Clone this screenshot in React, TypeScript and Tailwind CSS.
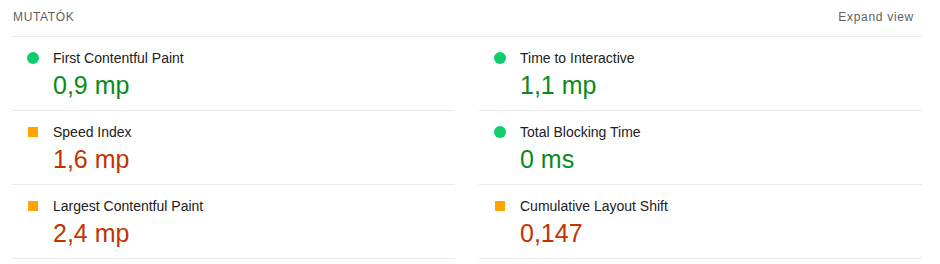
import React from 'react';

type Rating = 'pass' | 'average';

interface Metric {
  title: string;
  value: string;
  rating: Rating;
}

const LEFT: Metric[] = [
  { title: 'First Contentful Paint', value: '0,9 mp', rating: 'pass' },
  { title: 'Speed Index', value: '1,6 mp', rating: 'average' },
  { title: 'Largest Contentful Paint', value: '2,4 mp', rating: 'average' },
];

const RIGHT: Metric[] = [
  { title: 'Time to Interactive', value: '1,1 mp', rating: 'pass' },
  { title: 'Total Blocking Time', value: '0 ms', rating: 'pass' },
  { title: 'Cumulative Layout Shift', value: '0,147', rating: 'average' },
];

const MetricRow: React.FC<{ metric: Metric }> = ({ metric }) => {
  const pass = metric.rating === 'pass';
  return (
    <div className="h-[74px] border-b border-[#ebebeb] flex flex-col pt-[11px]">
      <div className="flex items-center h-[20px]">
        <div className="w-[41px] pl-[15px] flex">
          <div className="w-[12px] h-[12px] flex items-center justify-center">
            {pass ? (
              <span className="block w-[12px] h-[12px] rounded-full bg-[#0cce6b]" />
            ) : (
              <span className="block w-[10px] h-[10px] bg-[#ffa400]" />
            )}
          </div>
        </div>
        <span className="text-[14px] leading-[20px] text-[#212121]">{metric.title}</span>
      </div>
      <div
        className={`pl-[41px] mt-[2px] text-[25px] leading-[30px] ${
          pass ? 'text-[#0a8a1a]' : 'text-[#c33300]'
        }`}
      >
        {metric.value}
      </div>
    </div>
  );
};

export default function App() {
  return (
    <div className="w-[940px] h-[264px] bg-white font-['Liberation_Sans',Arial,sans-serif] overflow-hidden">
      <div className="ml-[12px] w-[910px]">
        <div className="h-[37px] border-b border-[#ebebeb] flex items-start justify-between pt-[9px] pl-px pr-[8px]">
          <span className="text-[12px] leading-[16px] tracking-[0.65px] uppercase text-[#5f5f5f]">
            Mutatók
          </span>
          <button className="text-[12px] leading-[16px] tracking-[0.7px] text-[#5f5f5f]">
            Expand view
          </button>
        </div>
        <div className="grid grid-cols-2 gap-x-6">
          <div>
            {LEFT.map(m => (
              <MetricRow key={m.title} metric={m} />
            ))}
          </div>
          <div>
            {RIGHT.map(m => (
              <MetricRow key={m.title} metric={m} />
            ))}
          </div>
        </div>
      </div>
    </div>
  );
}
